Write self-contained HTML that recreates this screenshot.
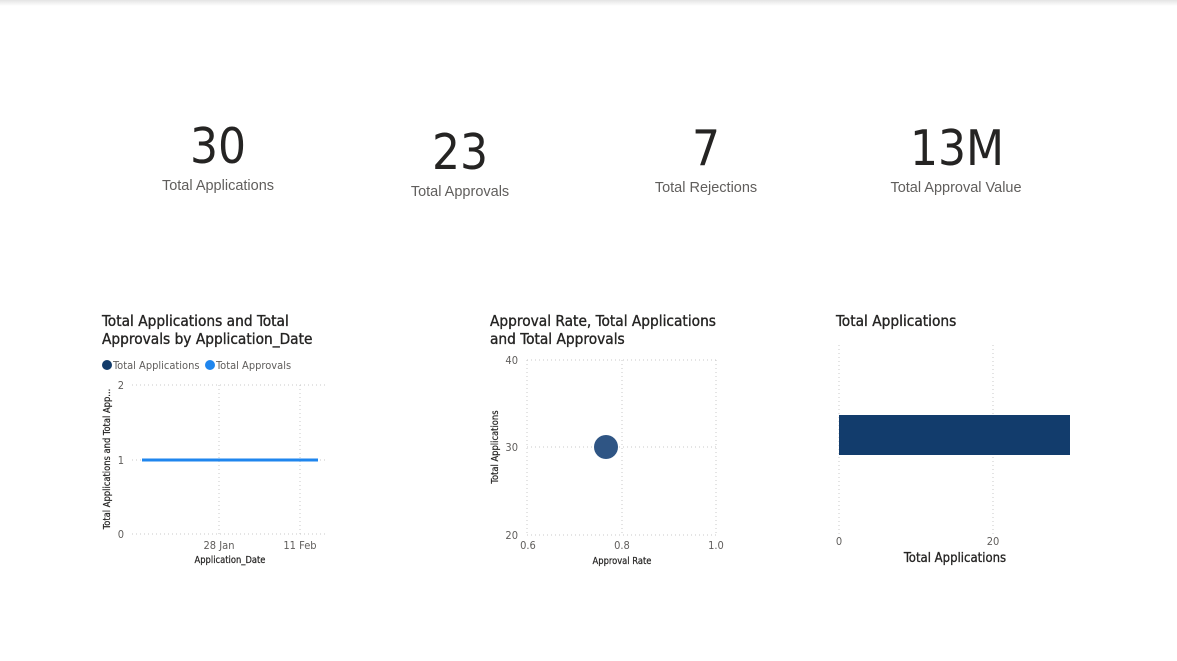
<!DOCTYPE html>
<html><head><style>
body{margin:0;width:1177px;height:661px;background:#fff;overflow:hidden;position:relative;font-family:"DejaVu Sans Condensed","Liberation Sans",sans-serif}
.top{position:absolute;left:0;top:0;width:1177px;height:6px;background:linear-gradient(#e4e4e4,#fff)}
svg{position:absolute;left:0;top:0}
</style></head><body>
<div class="top"></div>
<svg width="1177" height="661" font-family="'DejaVu Sans Condensed','Liberation Sans',sans-serif">
<g fill="#252423" font-size="49" text-anchor="middle">
<text x="218" y="163">30</text><text x="460" y="169">23</text><text x="706" y="165">7</text><text x="957" y="165">13M</text>
</g>
<g fill="#605e5c" font-size="14.5" text-anchor="middle" font-family="'Liberation Sans',sans-serif">
<text x="218" y="190">Total Applications</text><text x="460" y="196">Total Approvals</text><text x="706" y="192">Total Rejections</text><text x="956" y="192">Total Approval Value</text>
</g>
<g fill="#252423" font-size="15.3" stroke="#252423" stroke-width="0.35">
<text x="102" y="326">Total Applications and Total</text><text x="102" y="344">Approvals by Application_Date</text>
<text x="490" y="326">Approval Rate, Total Applications</text><text x="490" y="344">and Total Approvals</text>
<text x="836" y="326">Total Applications</text>
</g>
<circle cx="107" cy="365" r="5" fill="#123b6a"/><circle cx="210" cy="365" r="5" fill="#1f86ee"/>
<g fill="#605e5c" font-size="11"><text x="113" y="369">Total Applications</text><text x="216" y="369">Total Approvals</text></g>
<g stroke="#c8c8c8" stroke-dasharray="1,3" stroke-width="1" fill="none">
<path d="M132 385H325M132 460H325M132 534H325M219 385V534M300 385V534"/>
<path d="M527 360H716M527 447H716M527 535H716M527 360V535M622 360V535M716 360V535"/>
<path d="M839 345V535M993 345V535"/>
</g>
<path d="M142 460H318" stroke="#1f86ee" stroke-width="3"/>
<circle cx="606" cy="447" r="12" fill="#2f5584"/>
<rect x="839" y="415" width="231" height="40" fill="#123c6c"/>
<g fill="#605e5c" font-size="11" text-anchor="end">
<text x="124" y="389">2</text><text x="124" y="464">1</text><text x="124" y="538">0</text>
<text x="518" y="364">40</text><text x="518" y="451">30</text><text x="518" y="539">20</text>
</g>
<g fill="#605e5c" font-size="11" text-anchor="middle">
<text x="219" y="549">28 Jan</text><text x="300" y="549">11 Feb</text>
<text x="528" y="549">0.6</text><text x="622" y="549">0.8</text><text x="716" y="549">1.0</text>
<text x="839" y="545">0</text><text x="993" y="545">20</text>
</g>
<g fill="#252423" font-size="9.3" text-anchor="middle" stroke="#252423" stroke-width="0.2">
<text x="230" y="563">Application_Date</text><text x="622" y="564">Approval Rate</text>
<text transform="translate(110,459) rotate(-90)">Total Applications and Total App...</text>
<text transform="translate(498,447) rotate(-90)">Total Applications</text>
</g>
<text x="955" y="562" fill="#252423" font-size="13" stroke="#252423" stroke-width="0.3" text-anchor="middle">Total Applications</text>
</svg>
</body></html>
